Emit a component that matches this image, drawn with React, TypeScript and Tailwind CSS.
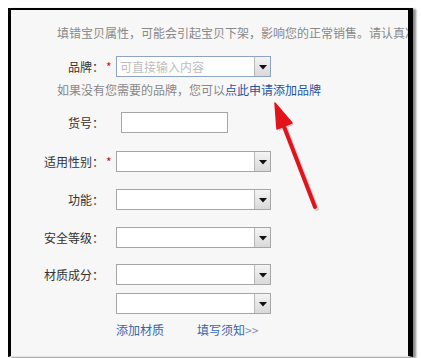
import React from "react"

const font = { fontFamily: '"Noto Sans CJK SC", "Liberation Sans", sans-serif' }

function DropButton() {
  return (
    <div className="flex h-full w-[16px] items-end justify-center border-l border-[#b8b8b8] bg-gradient-to-b from-[#f4f4f4] to-[#d9d9d9] pb-[6px]">
      <svg width="8" height="5" viewBox="0 0 8 5">
        <path d="M0 0H8L4 4.5Z" fill="#111" />
      </svg>
    </div>
  )
}

function Select({ placeholder, blue }: { placeholder?: string; blue?: boolean }) {
  return (
    <div
      className={
        "flex h-[21px] w-[155px] items-stretch border bg-white " +
        (blue ? "border-[#8ea4c4]" : "border-[#a6a6a6]")
      }
    >
      <div className="flex flex-1 items-center pl-[3px] text-[12px] text-[#bdbdbd]">{placeholder}</div>
      <DropButton />
    </div>
  )
}

function Row({
  label,
  required,
  className,
  children,
}: {
  label?: string
  required?: boolean
  className?: string
  children: React.ReactNode
}) {
  return (
    <div className={"flex items-center " + (className ?? "")}>
      <div className="w-[93px] text-right text-[12px] leading-[16px] text-[#333]">{label}</div>
      <div className="w-[12px] pl-[2px] text-[12px] leading-[16px] text-[#d01010]">{required ? "*" : ""}</div>
      {children}
    </div>
  )
}

export default function App() {
  return (
    <div className="relative h-[358px] w-[421px] overflow-hidden bg-white" style={font}>
      <div className="ml-[8px] mt-[8px] h-[349px] w-[405px] overflow-hidden border-b border-l-[3px] border-r-[5px] border-t-[2px] border-b-[#e2e2e2] border-l-black border-r-black border-t-black bg-[#f7f7f7] shadow-[3px_1px_2px_rgba(0,0,0,0.45)]">
        <div className="mt-[15px] whitespace-nowrap pl-[46px] text-[12px] leading-[16px] text-[#888]">
          填错宝贝属性，可能会引起宝贝下架，影响您的正常销售。请认真准确填写
        </div>

        <Row label="品牌：" required className="mt-[15px]">
          <Select placeholder="可直接输入内容" blue />
        </Row>

        <div className="mt-[5px] whitespace-nowrap pl-[46px] text-[12px] leading-[16px] text-[#888]">
          如果没有您需要的品牌，您可以<span className="text-[#2454a0]">点此申请添加品牌</span>
        </div>

        <Row label="货号：" className="mt-[14px]">
          <div className="ml-[5px] h-[21px] w-[107px] border border-[#a6a6a6] bg-white" />
        </Row>

        <Row label="适用性别：" required className="mt-[18px]">
          <Select />
        </Row>

        <Row label="功能：" className="mt-[17px]">
          <Select />
        </Row>

        <Row label="安全等级：" className="mt-[17px]">
          <Select />
        </Row>

        <Row label="材质成分：" className="mt-[16px]">
          <Select />
        </Row>

        <Row className="mt-[8px]">
          <Select />
        </Row>

        <div className="mt-[8px] flex pl-[105px] text-[12px] leading-[16px]">
          <span className="text-[#3566b0]">添加材质</span>
          <span className="ml-[33px] text-[#3566b0]">
            填写须知<span className="text-[#7d93bd]">&gt;&gt;</span>
          </span>
        </div>
      </div>

      <svg className="pointer-events-none absolute left-0 top-0" width="421" height="358" viewBox="0 0 421 358">
        <g opacity="0.25" transform="translate(2 2)">
          <line x1="315" y1="207" x2="283" y2="124" stroke="#555" strokeWidth="4" strokeLinecap="round" />
          <path d="M275 103L292 123L277 129Z" fill="#555" />
        </g>
        <line x1="315" y1="207" x2="283" y2="124" stroke="#e3131b" strokeWidth="4" strokeLinecap="round" />
        <path d="M275 103L292 123L277 129Z" fill="#e3131b" stroke="#e3131b" strokeWidth="1.5" strokeLinejoin="round" />
      </svg>
    </div>
  )
}
